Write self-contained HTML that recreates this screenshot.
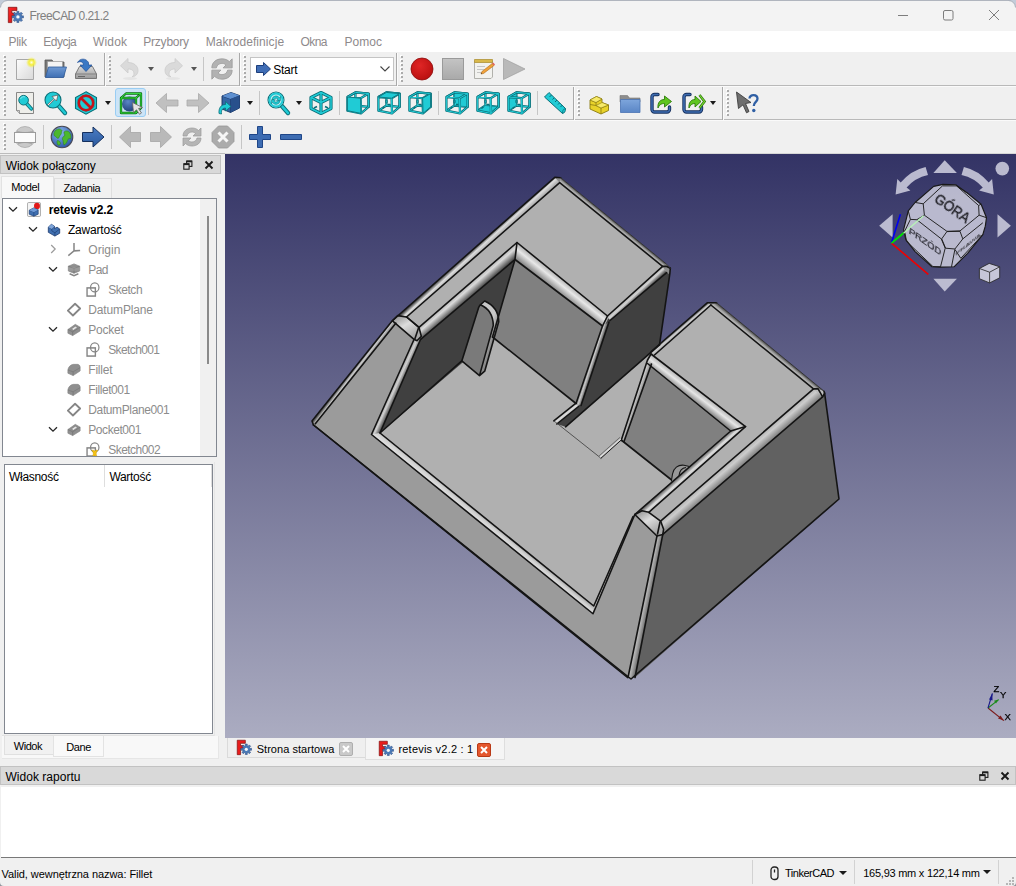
<!DOCTYPE html>
<html lang="pl">
<head>
<meta charset="utf-8">
<title>FreeCAD 0.21.2</title>
<style>
*{box-sizing:border-box;margin:0;padding:0}
html,body{width:1016px;height:886px;overflow:hidden;background:#f0f0f0}
body{position:relative;font-family:"Liberation Sans","DejaVu Sans",sans-serif;font-size:12px;color:#000}
.abs{position:absolute}
.t{position:absolute;white-space:nowrap;line-height:15px}
#titlebar{left:0;top:0;width:1016px;height:31px;background:#f3f3f3}
#menubar{left:0;top:31px;width:1016px;height:21px;background:#fff}
.tbline{position:absolute;left:0;width:1016px;height:2px;background:linear-gradient(#b9b9b9 50%,#fafafa 50%)}
.vsep{position:absolute;width:1px;background:#c6c6c6}
.grip{position:absolute;width:3px;height:28px;background-image:linear-gradient(#ababab 50%,transparent 50%),linear-gradient(#fff 50%,transparent 50%);background-size:2px 4px,2px 4px;background-position:1px 1px,0 0;background-repeat:repeat-y,repeat-y}
.ic{position:absolute;width:24px;height:24px;overflow:visible}
.dd{position:absolute;width:0;height:0;border-left:3.5px solid transparent;border-right:3.5px solid transparent;border-top:4px solid #1a1a1a}
.docktitle{position:absolute;background:#d9d9d9;border:1px solid #c2c2c2;height:18px}
.tr{color:#8c8c8c}
</style>
</head>
<body>
<!-- TITLE BAR -->
<div id="titlebar" class="abs"></div>
<div class="abs" style="left:0;top:0;width:1016px;height:1px;background:#b0b5be"></div>
<svg class="abs" style="left:0;top:0" width="12" height="12" viewBox="0 0 12 12"><path d="M0 0H7V.5A6.500 6.500 0 0 0 .5 7H0Z" fill="#c3ccd9"/><path d="M.5 7.500A7 7 0 0 1 7.500 .5" fill="none" stroke="#a9afba" stroke-width="1"/></svg>
<svg class="abs" style="left:7px;top:6px" width="18" height="18" viewBox="0 0 18 18"><defs><linearGradient id="gF" x1="0" y1="0" x2="1" y2="1"><stop offset="0" stop-color="#ff2a2a"/><stop offset="1" stop-color="#c80f0f"/></linearGradient></defs>
 <path d="M1.300 1.300H9.900V4.600H4.800V7H8V9.700H4.800V16.600H1.300Z" fill="url(#gF)" stroke="#7a0c0c" stroke-width="0.7"/>
 <path d="M9.83 5.40L11.97 5.40L11.81 7.11L12.94 7.57L14.03 6.26L15.54 7.77L14.23 8.86L14.69 9.99L16.40 9.83L16.40 11.97L14.69 11.81L14.23 12.94L15.54 14.03L14.03 15.54L12.94 14.23L11.81 14.69L11.97 16.40L9.83 16.40L9.99 14.69L8.86 14.23L7.77 15.54L6.26 14.03L7.57 12.94L7.11 11.81L5.40 11.97L5.40 9.83L7.11 9.99L7.57 8.86L6.26 7.77L7.77 6.26L8.86 7.57L9.99 7.11Z" fill="#4a7ab8" stroke="#2b4d85" stroke-width="0.6" stroke-linejoin="round"/>
 <circle cx="10.900" cy="10.900" r="1.700" fill="#f7f7f7"/>
</svg>
<div class="t" style="left:29.5px;top:9.2px;font-size:12px;letter-spacing:-0.54px;color:#808080;">FreeCAD 0.21.2</div>
<svg class="abs" style="left:890px;top:4px" width="120" height="24" viewBox="0 0 120 24" fill="none" stroke="#7d7d7d" stroke-width="1">
 <path d="M8 11.500H18"/><rect x="53.500" y="6.500" width="9.500" height="9.500" rx="1.500"/><path d="M99 6l10 10M109 6l-10 10"/>
</svg>
<svg class="abs" style="left:1004px;top:0" width="12" height="12" viewBox="0 0 12 12"><path d="M12 0H5V.5A6.500 6.500 0 0 1 11.500 7H12Z" fill="#c3ccd9"/><path d="M11.500 7.500A7 7 0 0 0 4.500 .5" fill="none" stroke="#a9afba" stroke-width="1"/></svg>
<!-- MENU BAR -->
<div id="menubar" class="abs"></div>
<div class="t" style="left:8.5px;top:34.8px;font-size:12px;letter-spacing:-0.28px;color:#8e8a8c;">Plik</div>
<div class="t" style="left:43.3px;top:34.8px;font-size:12px;letter-spacing:-0.51px;color:#8e8a8c;">Edycja</div>
<div class="t" style="left:93.1px;top:34.8px;font-size:12px;letter-spacing:0.14px;color:#8e8a8c;">Widok</div>
<div class="t" style="left:143.3px;top:34.8px;font-size:12px;letter-spacing:-0.23px;color:#8e8a8c;">Przybory</div>
<div class="t" style="left:205.7px;top:34.8px;font-size:12px;letter-spacing:0.08px;color:#8e8a8c;">Makrodefinicje</div>
<div class="t" style="left:300.6px;top:34.8px;font-size:12px;letter-spacing:-0.63px;color:#8e8a8c;">Okna</div>
<div class="t" style="left:344.5px;top:34.8px;font-size:12px;letter-spacing:0.01px;color:#8e8a8c;">Pomoc</div>
<!-- TOOLBARS -->
<div id="toolbars">
<div class="tbline" style="top:85px"></div>
<div class="tbline" style="top:119px"></div>
<div class="tbline" style="top:153px;height:1px;background:#bcbcbc"></div>
<!-- row1 grips & separators -->
<div class="grip" style="left:3px;top:55px"></div>
<div class="vsep" style="left:104px;top:53px;height:33px;width:2px;background:linear-gradient(to right,#a9a9a9 50%,#fbfbfb 50%)"></div>
<div class="grip" style="left:108px;top:55px"></div>
<div class="vsep" style="left:203px;top:57px;height:24px"></div>
<div class="vsep" style="left:239px;top:53px;height:33px;width:2px;background:linear-gradient(to right,#a9a9a9 50%,#fbfbfb 50%)"></div>
<div class="grip" style="left:243px;top:55px"></div>
<div class="vsep" style="left:396px;top:53px;height:33px;width:2px;background:linear-gradient(to right,#a9a9a9 50%,#fbfbfb 50%)"></div>
<div class="grip" style="left:400px;top:55px"></div>
<!-- row2 -->
<div class="grip" style="left:3px;top:89px"></div>
<div class="vsep" style="left:148px;top:91px;height:24px"></div>
<div class="vsep" style="left:259px;top:91px;height:24px"></div>
<div class="vsep" style="left:339px;top:91px;height:24px"></div>
<div class="vsep" style="left:438px;top:91px;height:24px"></div>
<div class="vsep" style="left:537px;top:91px;height:24px"></div>
<div class="vsep" style="left:573px;top:87px;height:33px;width:2px;background:linear-gradient(to right,#a9a9a9 50%,#fbfbfb 50%)"></div>
<div class="grip" style="left:577px;top:89px"></div>
<div class="vsep" style="left:722px;top:87px;height:33px;width:2px;background:linear-gradient(to right,#a9a9a9 50%,#fbfbfb 50%)"></div>
<div class="grip" style="left:726px;top:89px"></div>
<!-- row3 -->
<div class="grip" style="left:3px;top:123px"></div>
<div class="vsep" style="left:43px;top:125px;height:24px"></div>
<div class="vsep" style="left:111px;top:125px;height:24px"></div>
<div class="vsep" style="left:241px;top:125px;height:24px"></div>

<!-- ROW 1 ICONS -->
<!-- new doc -->
<svg class="ic" style="left:13px;top:57px" viewBox="0 0 24 24"><defs><linearGradient id="gdoc" x1="0" y1="0" x2="1" y2="1"><stop offset="0" stop-color="#fdfdfd"/><stop offset="1" stop-color="#d9d9d9"/></linearGradient><radialGradient id="gsun"><stop offset="0" stop-color="#fffde0"/><stop offset=".45" stop-color="#f4ee3a"/><stop offset="1" stop-color="#f4ee3a" stop-opacity="0"/></radialGradient></defs>
 <path d="M3.500 2.500H20.500V22.500H3.500Z" fill="url(#gdoc)" stroke="#a8a8a8"/><circle cx="18.500" cy="5.500" r="5.500" fill="url(#gsun)"/></svg>
<!-- open folder -->
<svg class="ic" style="left:43px;top:57px" viewBox="0 0 24 24"><defs><linearGradient id="gfol" x1="0" y1="0" x2="0" y2="1"><stop offset="0" stop-color="#6f9ad3"/><stop offset="1" stop-color="#3f6fb3"/></linearGradient></defs>
 <path d="M2 3H9L10.500 5H21V20H2Z" fill="#777" stroke="#555" stroke-width=".8"/><path d="M4.500 4.500H19.500V14H4.500Z" fill="#f4f4f4" stroke="#999" stroke-width=".6"/><path d="M5.500 10H23.500L20.500 20.500H2.500Z" fill="url(#gfol)" stroke="#2f5a9b" stroke-width=".8"/></svg>
<!-- save -->
<svg class="ic" style="left:74px;top:57px" viewBox="0 0 24 24"><defs><linearGradient id="gdrv" x1="0" y1="0" x2="0" y2="1"><stop offset="0" stop-color="#d8d8d8"/><stop offset="1" stop-color="#9a9a9a"/></linearGradient></defs>
 <path d="M5.500 9.500H18.500L22.500 17V21.500H1.500V17Z" fill="url(#gdrv)" stroke="#6e6e6e" stroke-width=".9"/><path d="M1.500 17H22.500" stroke="#777" stroke-width=".8"/><path d="M4 19.500h7" stroke="#666" stroke-width="1"/>
 <path d="M3.500 5.500C6 1 12 1 14.500 5.500V8H18L12 14.500L6 8H9.500C9.500 5.500 7 3.500 3.500 5.500Z" fill="#3a78c4" stroke="#1f4f96" stroke-width=".7"/></svg>
<!-- undo (disabled) -->
<svg class="ic" style="left:118px;top:57px" viewBox="0 0 24 24"><path d="M2.500 8.800L10 1.500V5.500C16 5.500 20 9 20 13.500C20 17 17.500 19.500 14 20C16 18.500 16.500 16.500 15.500 14.500C14.500 12.500 12.500 12 10 12V16Z" fill="#dadada" stroke="#cbcbcb" stroke-width=".8"/><ellipse cx="12" cy="21.500" rx="7" ry="1.500" fill="#e4e4e4"/></svg>
<div class="dd" style="left:148px;top:67px;border-top-color:#555"></div>
<!-- redo (disabled) -->
<svg class="ic" style="left:161px;top:57px" viewBox="0 0 24 24"><g transform="translate(24,0) scale(-1,1)"><path d="M2.500 8.800L10 1.500V5.500C16 5.500 20 9 20 13.500C20 17 17.500 19.500 14 20C16 18.500 16.500 16.500 15.500 14.500C14.500 12.500 12.500 12 10 12V16Z" fill="#dadada" stroke="#cbcbcb" stroke-width=".8"/><ellipse cx="12" cy="21.500" rx="7" ry="1.500" fill="#e4e4e4"/></g></svg>
<div class="dd" style="left:191px;top:67px;border-top-color:#555"></div>
<!-- refresh (disabled) -->
<svg class="ic" style="left:210px;top:56.5px" viewBox="0 0 24 24"><g fill="#b2b2b2" stroke="#989898" stroke-width=".7" transform="translate(12 12) scale(1.13) translate(-12 -12)"><path d="M3 11C3 6 7 3 12 3C15 3 17 4 18.500 5.500L21 3V11H13L15.500 8.500C14.500 7.500 13.500 7 12 7C9.500 7 7.500 8.500 7 11Z"/><path d="M21 13C21 18 17 21 12 21C9 21 7 20 5.500 18.500L3 21V13H11L8.500 15.500C9.500 16.500 10.500 17 12 17C14.500 17 16.500 15.500 17 13Z"/></g></svg>
<!-- workbench combo -->
<div class="abs" style="left:250px;top:57px;width:144px;height:24px;background:#fff;border:1px solid #c4c4c4"></div>
<svg class="abs" style="left:255px;top:61px" width="17" height="16" viewBox="0 0 17 16"><path d="M1.500 4.500H8.500V1.500L15.500 8L8.500 14.500V11.500H1.500Z" fill="#3f6db5" stroke="#1d3f7c" stroke-width="1"/></svg>
<div class="t" style="left:273.3px;top:62.7px;font-size:12px;letter-spacing:-0.29px;">Start</div>
<svg class="abs" style="left:379px;top:65px" width="12" height="8" viewBox="0 0 12 8"><path d="M1.500 1.500L6 6L10.500 1.500" fill="none" stroke="#444" stroke-width="1.100"/></svg>
<!-- record -->
<svg class="ic" style="left:410px;top:57px" viewBox="0 0 24 24"><defs><radialGradient id="gred" cx=".4" cy=".35" r=".7"><stop offset="0" stop-color="#e02626"/><stop offset="1" stop-color="#b80f0f"/></radialGradient></defs><circle cx="12" cy="12" r="11" fill="url(#gred)" stroke="#8c0c0c" stroke-width=".8"/></svg>
<!-- stop square -->
<svg class="ic" style="left:441px;top:57px" viewBox="0 0 24 24"><defs><linearGradient id="gsq" x1="0" y1="0" x2="0" y2="1"><stop offset="0" stop-color="#c4c4c4"/><stop offset="1" stop-color="#a9a9a9"/></linearGradient></defs><rect x="1.500" y="1.500" width="21" height="21" fill="url(#gsq)" stroke="#9a9a9a"/></svg>
<!-- notepad -->
<svg class="ic" style="left:472px;top:57px" viewBox="0 0 24 24"><path d="M2.500 4.500H20.500V20L19 21.500H2.500Z" fill="#f2f2ef" stroke="#a9a9a4" stroke-width=".9"/><path d="M2.500 2.500H20.500V5.500H2.500Z" fill="#d8b84a" stroke="#a88a2a" stroke-width=".7"/><path d="M5 9.500h8M5 12.500h7M5 15.500h5" stroke="#b9b9b9" stroke-width=".8"/><path d="M9 17l2.500-.5L22 8.500l-1.800-2L10 14.500z" fill="#f0a23a" stroke="#b06a18" stroke-width=".6"/><path d="M20.200 6.500l1.800 2 1-1-1.800-2z" fill="#e25a5a"/><path d="M9 17l1-.3-.6-.9z" fill="#333"/></svg>
<!-- play (disabled) -->
<svg class="ic" style="left:502px;top:57px" viewBox="0 0 24 24"><path d="M1.500 1.500L23 12L1.500 22.500Z" fill="#b9b9b9" stroke="#a2a2a2" stroke-width=".8"/></svg>
<svg class="ic" style="left:13px;top:91px" viewBox="0 0 24 24"><path d="M3.500 1.500H20.500V22.500H6.500L3.500 19.500Z" fill="#eeeeea" stroke="#7c7c7c" stroke-width=".9"/><path d="M3.500 19.500H6.500V22.500" fill="#cfcfcf" stroke="#7c7c7c" stroke-width=".7"/><path d="M13.500 12.500L18.300 17.800" stroke="#0b6f78" stroke-width="3.600" stroke-linecap="round"/><path d="M13.500 12.500L18.300 17.800" stroke="#20cbd5" stroke-width="2" stroke-linecap="round"/><circle cx="10.600" cy="9.200" r="4.800" fill="#20cbd5" stroke="#0b6f78" stroke-width="1"/><path d="M7.500 8a3.200 3.200 0 0 1 4.500-2" stroke="#6fe3ea" stroke-width="1.100" fill="none"/></svg>
<svg class="ic" style="left:43px;top:91px" viewBox="0 0 24 24"><path d="M15 14L22 22" stroke="#0b6f78" stroke-width="4.400" stroke-linecap="round"/><path d="M15 14L22 22" stroke="#20cbd5" stroke-width="2.600" stroke-linecap="round"/><circle cx="10" cy="9" r="8" fill="#20cbd5" stroke="#0b6f78" stroke-width="1.100"/><path d="M4.500 13.500L11 7.500L9 5.500L15 4L13.500 10L11.800 8.300L5.500 14.500Z" fill="#f4f4f4" stroke="#555" stroke-width=".7"/></svg>
<svg class="ic" style="left:74px;top:91px" viewBox="0 0 24 24"><path d="M12 0.800L22.500 6.500V17.500L12 23.200L1.500 17.500V6.500Z" fill="#20cbd5" stroke="#0b6f78" stroke-width="1.100"/><path d="M12 3.500L20 8V16L12 20.500L4 16V8Z" fill="none" stroke="#0b6f78" stroke-width=".6"/><circle cx="12" cy="12" r="7.200" fill="none" stroke="#c4141a" stroke-width="2.600"/><path d="M7 7L17 17" stroke="#c4141a" stroke-width="2.600"/></svg>
<div class="dd" style="left:105px;top:101px;border-top-color:#1a1a1a"></div>
<div class="abs" style="left:115px;top:88px;width:31px;height:29px;background:#cce4f7;border:1px solid #99cdf3;border-radius:3px"></div>
<svg class="ic" style="left:119px;top:91px" viewBox="0 0 24 24"><defs><radialGradient id="gsph" cx=".4" cy=".35" r=".7"><stop offset="0" stop-color="#5b86c6"/><stop offset="1" stop-color="#1f3f7a"/></radialGradient></defs><circle cx="10.500" cy="13" r="7.500" fill="url(#gsph)"/><g fill="none" stroke="#0a6e12" stroke-width="2.300" stroke-linejoin="round"><path d="M2 7H17V22H2Z"/><path d="M2 7L7 2.500H22V17L17 22M17 7L22 2.500"/></g><g fill="none" stroke="#35d83f" stroke-width="1" stroke-linejoin="round"><path d="M2 7H17V22H2Z"/><path d="M2 7L7 2.500H22V17L17 22M17 7L22 2.500"/></g><path d="M13.500 11.500L23.500 16.500L19.500 17.500L22.500 22L20.500 23.300L17.500 18.800L14.500 21.500Z" fill="#e4e4e4" stroke="#666" stroke-width=".8"/></svg>
<svg class="ic" style="left:155px;top:91px" viewBox="0 0 24 24"><path d="M1 12L11.500 2.500V9H23V15H11.500V21.500Z" fill="#c0c0c0" stroke="#aaaaaa" stroke-width=".8"/></svg>
<svg class="ic" style="left:186px;top:91px" viewBox="0 0 24 24"><g transform="translate(24,0) scale(-1,1)"><path d="M1 12L11.500 2.500V9H23V15H11.500V21.500Z" fill="#c0c0c0" stroke="#aaaaaa" stroke-width=".8"/></g></svg>
<svg class="ic" style="left:217px;top:91px" viewBox="0 0 24 24"><path d="M5 5L14 1.500L22.500 4.500V17L13.500 21.500L5 18Z" fill="#3465a4" stroke="#16305e" stroke-width=".9"/><path d="M5 5L13.500 8L22.500 4.500M13.500 8V21.500" fill="none" stroke="#16305e" stroke-width=".8"/><path d="M5 5L14 1.500L22.500 4.500L13.500 8Z" fill="#5d8fd0"/><path d="M13.500 8L22.500 4.500V17L13.500 21.500Z" fill="#28508c"/><path d="M2 22.500C1.500 17 4 13.500 8.500 13.500V10.500L14 15.500L8.500 20V17C6 17 4 18.500 4.500 23Z" fill="#20cbd5" stroke="#0b6f78" stroke-width=".8"/></svg>
<div class="dd" style="left:247px;top:101px;border-top-color:#1a1a1a"></div>
<svg class="ic" style="left:266px;top:91px" viewBox="0 0 24 24"><path d="M15 14L22 22" stroke="#0b6f78" stroke-width="4.400" stroke-linecap="round"/><path d="M15 14L22 22" stroke="#20cbd5" stroke-width="2.600" stroke-linecap="round"/><circle cx="10" cy="9" r="8" fill="#bfeff2" stroke="#0b6f78" stroke-width="1.100"/><circle cx="10" cy="9" r="6.500" fill="none" stroke="#20cbd5" stroke-width="2"/><path d="M6 8.500A4 4 0 0 1 13.500 7L14.500 5.500V9.500H10.500L12 8A2.500 2.500 0 0 0 8 8.500ZM14 9.800A4 4 0 0 1 6.500 11.300L5.500 12.800V8.800H9.500L8 10.300A2.500 2.500 0 0 0 12 9.800Z" fill="#20cbd5" stroke="#0b6f78" stroke-width=".5"/></svg>
<div class="dd" style="left:296px;top:101px;border-top-color:#1a1a1a"></div>
<svg class="ic" style="left:309px;top:91px" viewBox="0 0 24 24"><g fill="none" stroke="#0b6f78" stroke-width="3.200" stroke-linejoin="round"><path d="M12 1.500L22 6.500V17.500L12 22.500L2 17.500V6.500Z"/><path d="M2 6.500L12 11.500L22 6.500M12 11.500V22.500M12 1.500V11"/></g><g fill="none" stroke="#20cbd5" stroke-width="1.500" stroke-linejoin="round"><path d="M12 1.500L22 6.500V17.500L12 22.500L2 17.500V6.500Z"/><path d="M2 6.500L12 11.500L22 6.500M12 11.500V22.500M12 1.500V11"/></g><path d="M5 17l3-1.500M19 17l-3-1.500" stroke="#0b6f78" stroke-width="1.600"/></svg>
<svg class="ic" style="left:346px;top:91px" viewBox="0 0 24 24"><path d="M9.4 1.4L22.6 2.6L22.6 15.9L9.4 14.5ZM1.4 6L9.4 1.4M1.4 19.7L9.4 14.5" fill="none" stroke="#0b6f78" stroke-width="2.300" stroke-linejoin="round"/><path d="M9.4 1.4L22.6 2.6L22.6 15.9L9.4 14.5ZM1.4 6L9.4 1.4M1.4 19.7L9.4 14.5" fill="none" stroke="#20cbd5" stroke-width="1" stroke-linejoin="round"/><path d="M1.4 6L14.6 7.2L15 22.4L1.4 19.7ZM14.6 7.2L22.6 2.6L22.6 15.9L15 22.4ZM1.4 6L9.4 1.4L22.6 2.6" fill="none" stroke="#0b6f78" stroke-width="2.300" stroke-linejoin="round"/><path d="M1.4 6L14.6 7.2L15 22.4L1.4 19.7ZM14.6 7.2L22.6 2.6L22.6 15.9L15 22.4ZM1.4 6L9.4 1.4L22.6 2.6" fill="none" stroke="#20cbd5" stroke-width="1" stroke-linejoin="round"/><path d="M1.4 6L14.6 7.2L15 22.4L1.4 19.7Z" fill="#20cbd5" stroke="#0b6f78" stroke-width=".9" stroke-linejoin="round"/></svg>
<svg class="ic" style="left:377px;top:91px" viewBox="0 0 24 24"><path d="M9.4 1.4L22.6 2.6L22.6 15.9L9.4 14.5ZM1.4 6L9.4 1.4M1.4 19.7L9.4 14.5" fill="none" stroke="#0b6f78" stroke-width="2.300" stroke-linejoin="round"/><path d="M9.4 1.4L22.6 2.6L22.6 15.9L9.4 14.5ZM1.4 6L9.4 1.4M1.4 19.7L9.4 14.5" fill="none" stroke="#20cbd5" stroke-width="1" stroke-linejoin="round"/><ellipse cx="9.500" cy="10.500" rx=".9" ry="1.600" fill="none" stroke="#0b6f78" stroke-width=".8"/><path d="M5.500 17.500l2-1.500M11 13.500h2.500" stroke="#0b6f78" stroke-width="1.300"/><path d="M1.4 6L14.6 7.2L15 22.4L1.4 19.7ZM14.6 7.2L22.6 2.6L22.6 15.9L15 22.4ZM1.4 6L9.4 1.4L22.6 2.6" fill="none" stroke="#0b6f78" stroke-width="2.300" stroke-linejoin="round"/><path d="M1.4 6L14.6 7.2L15 22.4L1.4 19.7ZM14.6 7.2L22.6 2.6L22.6 15.9L15 22.4ZM1.4 6L9.4 1.4L22.6 2.6" fill="none" stroke="#20cbd5" stroke-width="1" stroke-linejoin="round"/><path d="M1.4 6L14.6 7.2L22.6 2.6L9.4 1.4Z" fill="#20cbd5" stroke="#0b6f78" stroke-width=".9" stroke-linejoin="round"/></svg>
<svg class="ic" style="left:408px;top:91px" viewBox="0 0 24 24"><path d="M9.4 1.4L22.6 2.6L22.6 15.9L9.4 14.5ZM1.4 6L9.4 1.4M1.4 19.7L9.4 14.5" fill="none" stroke="#0b6f78" stroke-width="2.300" stroke-linejoin="round"/><path d="M9.4 1.4L22.6 2.6L22.6 15.9L9.4 14.5ZM1.4 6L9.4 1.4M1.4 19.7L9.4 14.5" fill="none" stroke="#20cbd5" stroke-width="1" stroke-linejoin="round"/><ellipse cx="9.500" cy="10.500" rx=".9" ry="1.600" fill="none" stroke="#0b6f78" stroke-width=".8"/><path d="M5.500 17.500l2-1.500M11 13.500h2.500" stroke="#0b6f78" stroke-width="1.300"/><path d="M1.4 6L14.6 7.2L15 22.4L1.4 19.7ZM14.6 7.2L22.6 2.6L22.6 15.9L15 22.4ZM1.4 6L9.4 1.4L22.6 2.6" fill="none" stroke="#0b6f78" stroke-width="2.300" stroke-linejoin="round"/><path d="M1.4 6L14.6 7.2L15 22.4L1.4 19.7ZM14.6 7.2L22.6 2.6L22.6 15.9L15 22.4ZM1.4 6L9.4 1.4L22.6 2.6" fill="none" stroke="#20cbd5" stroke-width="1" stroke-linejoin="round"/><path d="M14.6 7.2L22.6 2.6L22.6 15.9L15 22.4Z" fill="#20cbd5" stroke="#0b6f78" stroke-width=".9" stroke-linejoin="round"/></svg>
<svg class="ic" style="left:445px;top:91px" viewBox="0 0 24 24"><path d="M9.4 1.4L22.6 2.6L22.6 15.9L9.4 14.5ZM1.4 6L9.4 1.4M1.4 19.7L9.4 14.5" fill="none" stroke="#0b6f78" stroke-width="2.300" stroke-linejoin="round"/><path d="M9.4 1.4L22.6 2.6L22.6 15.9L9.4 14.5ZM1.4 6L9.4 1.4M1.4 19.7L9.4 14.5" fill="none" stroke="#20cbd5" stroke-width="1" stroke-linejoin="round"/><path d="M9.4 1.4L22.6 2.6L22.6 15.9L9.4 14.5Z" fill="#20cbd5" stroke="#0b6f78" stroke-width=".6"/><ellipse cx="9.500" cy="10.500" rx=".9" ry="1.600" fill="none" stroke="#0b6f78" stroke-width=".8"/><path d="M5.500 17.500l2-1.500M11 13.500h2.500" stroke="#0b6f78" stroke-width="1.300"/><path d="M1.4 6L14.6 7.2L15 22.4L1.4 19.7ZM14.6 7.2L22.6 2.6L22.6 15.9L15 22.4ZM1.4 6L9.4 1.4L22.6 2.6" fill="none" stroke="#0b6f78" stroke-width="2.300" stroke-linejoin="round"/><path d="M1.4 6L14.6 7.2L15 22.4L1.4 19.7ZM14.6 7.2L22.6 2.6L22.6 15.9L15 22.4ZM1.4 6L9.4 1.4L22.6 2.6" fill="none" stroke="#20cbd5" stroke-width="1" stroke-linejoin="round"/></svg>
<svg class="ic" style="left:476px;top:91px" viewBox="0 0 24 24"><path d="M9.4 1.4L22.6 2.6L22.6 15.9L9.4 14.5ZM1.4 6L9.4 1.4M1.4 19.7L9.4 14.5" fill="none" stroke="#0b6f78" stroke-width="2.300" stroke-linejoin="round"/><path d="M9.4 1.4L22.6 2.6L22.6 15.9L9.4 14.5ZM1.4 6L9.4 1.4M1.4 19.7L9.4 14.5" fill="none" stroke="#20cbd5" stroke-width="1" stroke-linejoin="round"/><path d="M1.4 19.7L15 22.4L22.6 15.9L9.4 14.5Z" fill="#20cbd5" stroke="#0b6f78" stroke-width=".6"/><ellipse cx="9.500" cy="10.500" rx=".9" ry="1.600" fill="none" stroke="#0b6f78" stroke-width=".8"/><path d="M5.500 17.500l2-1.500M11 13.500h2.500" stroke="#0b6f78" stroke-width="1.300"/><path d="M1.4 6L14.6 7.2L15 22.4L1.4 19.7ZM14.6 7.2L22.6 2.6L22.6 15.9L15 22.4ZM1.4 6L9.4 1.4L22.6 2.6" fill="none" stroke="#0b6f78" stroke-width="2.300" stroke-linejoin="round"/><path d="M1.4 6L14.6 7.2L15 22.4L1.4 19.7ZM14.6 7.2L22.6 2.6L22.6 15.9L15 22.4ZM1.4 6L9.4 1.4L22.6 2.6" fill="none" stroke="#20cbd5" stroke-width="1" stroke-linejoin="round"/></svg>
<svg class="ic" style="left:507px;top:91px" viewBox="0 0 24 24"><path d="M9.4 1.4L22.6 2.6L22.6 15.9L9.4 14.5ZM1.4 6L9.4 1.4M1.4 19.7L9.4 14.5" fill="none" stroke="#0b6f78" stroke-width="2.300" stroke-linejoin="round"/><path d="M9.4 1.4L22.6 2.6L22.6 15.9L9.4 14.5ZM1.4 6L9.4 1.4M1.4 19.7L9.4 14.5" fill="none" stroke="#20cbd5" stroke-width="1" stroke-linejoin="round"/><path d="M1.4 6L9.4 1.4L9.4 14.5L1.4 19.7Z" fill="#20cbd5" stroke="#0b6f78" stroke-width=".6"/><ellipse cx="9.500" cy="10.500" rx=".9" ry="1.600" fill="none" stroke="#0b6f78" stroke-width=".8"/><path d="M5.500 17.500l2-1.500M11 13.500h2.500" stroke="#0b6f78" stroke-width="1.300"/><path d="M1.4 6L14.6 7.2L15 22.4L1.4 19.7ZM14.6 7.2L22.6 2.6L22.6 15.9L15 22.4ZM1.4 6L9.4 1.4L22.6 2.6" fill="none" stroke="#0b6f78" stroke-width="2.300" stroke-linejoin="round"/><path d="M1.4 6L14.6 7.2L15 22.4L1.4 19.7ZM14.6 7.2L22.6 2.6L22.6 15.9L15 22.4ZM1.4 6L9.4 1.4L22.6 2.6" fill="none" stroke="#20cbd5" stroke-width="1" stroke-linejoin="round"/></svg>
<svg class="ic" style="left:543px;top:91px" viewBox="0 0 24 24"><path d="M6 1.500L22.500 17.500C22.500 20.500 21.500 22 19.500 22.500L1.500 6Z" fill="#20cbd5" stroke="#0b6f78" stroke-width="1"/><path d="M22.500 17.500C20 18 19.500 20 19.500 22.500" fill="none" stroke="#0b6f78" stroke-width=".8"/><path d="M6.500 6l2-2M9.500 8.500l1.500-1.500M12 11l2-2M15 13.500l1.500-1.500M17.500 16l2-2" stroke="#0b6f78" stroke-width="1"/></svg>
<svg class="ic" style="left:587px;top:91px" viewBox="0 0 24 24"><path d="M3 9L9.500 5.500L15 8V11.500L21.500 14V19.500L14 23L3 18Z" fill="#e8d22a" stroke="#8a7a10" stroke-width=".9"/><path d="M3 9L9 11.500L15 8M9 11.500V14.500L14 17L21.500 14M14 17V23M3 13.500L9 14.500" fill="none" stroke="#8a7a10" stroke-width=".8"/><path d="M3 9L9.500 5.500L15 8L9 11.500Z" fill="#f7ea6a" stroke="#8a7a10" stroke-width=".6"/><path d="M9 14.500L15 11.500L21.500 14L14 17Z" fill="#f7ea6a" stroke="#8a7a10" stroke-width=".6"/></svg>
<svg class="ic" style="left:618px;top:91px" viewBox="0 0 24 24"><defs><linearGradient id="gf2" x1="0" y1="0" x2="0" y2="1"><stop offset="0" stop-color="#7ea6dc"/><stop offset="1" stop-color="#5a86c6"/></linearGradient></defs><path d="M2 4.500H9.500L11.500 7H22V11H2Z" fill="#8d8d8d" stroke="#777" stroke-width=".6"/><path d="M2.500 8.500H22V21.500H2.500Z" fill="url(#gf2)" stroke="#4a74b4" stroke-width=".8"/></svg>
<svg class="ic" style="left:649px;top:91px" viewBox="0 0 24 24"><path d="M9 3.500H5.500A2.500 2.500 0 0 0 3 6V18.500A2.500 2.500 0 0 0 5.500 21H18A2.500 2.500 0 0 0 20.500 18.500V16" fill="none" stroke="#16305e" stroke-width="3.400" stroke-linecap="round"/><path d="M9 3.500H5.500A2.500 2.500 0 0 0 3 6V18.500A2.500 2.500 0 0 0 5.500 21H18A2.500 2.500 0 0 0 20.500 18.500V16" fill="none" stroke="#3e6cb0" stroke-width="1.600" stroke-linecap="round"/><path d="M9 17C8.500 11.500 11 8.500 15.500 8.500V5L22.500 10.500L15.500 16V12.500C12.500 12.500 10.500 13.500 9 17Z" fill="#5fc51f" stroke="#2c7a0a" stroke-width=".9"/></svg>
<svg class="ic" style="left:681px;top:91px" viewBox="0 0 24 24"><path d="M9 3.500H5.500A2.500 2.500 0 0 0 3 6V18.500A2.500 2.500 0 0 0 5.500 21H18A2.500 2.500 0 0 0 20.500 18.500V16" fill="none" stroke="#16305e" stroke-width="3.400" stroke-linecap="round"/><path d="M9 3.500H5.500A2.500 2.500 0 0 0 3 6V18.500A2.500 2.500 0 0 0 5.500 21H18A2.500 2.500 0 0 0 20.500 18.500V16" fill="none" stroke="#3e6cb0" stroke-width="1.600" stroke-linecap="round"/><path d="M8 17C7.500 11.500 10 8.500 14 8.500V5L20 10.500L14 16V12.500C11.500 12.500 9.500 13.500 8 17Z" fill="#5fc51f" stroke="#2c7a0a" stroke-width=".9"/><path d="M18.500 4L23.500 10.500L18.500 17" fill="none" stroke="#2c7a0a" stroke-width="2.600"/><path d="M18.500 4L23.500 10.500L18.500 17" fill="none" stroke="#7fdc3a" stroke-width="1.100"/></svg>
<div class="dd" style="left:710px;top:101px;border-top-color:#1a1a1a"></div>
<svg class="ic" style="left:735px;top:91px" viewBox="0 0 24 24"><path d="M1.500 1L16 11.500L10.500 12.500L14 20.500L11.500 21.800L8 13.800L3.500 17.500Z" fill="#6e6e6e" stroke="#3e3e3e" stroke-width=".9"/><path d="M14.500 7.500C14.500 3 22.500 3 22.500 7.800C22.500 11 18.800 11 18.800 15" fill="none" stroke="#2f5fa4" stroke-width="2.300"/><circle cx="18.800" cy="19.500" r="1.700" fill="#2f5fa4"/></svg>
<svg class="ic" style="left:13px;top:125px" viewBox="0 0 24 24"><circle cx="12" cy="12" r="10.500" fill="#c9c9c9" stroke="#aaa" stroke-width=".8"/><path d="M4 6c3 2 13 2 16 0M5 19c3-2 11-2 14 0" fill="none" stroke="#9c9c9c" stroke-width=".9"/><rect x="1.500" y="7.500" width="21" height="10" fill="#fbfbfb" stroke="#9c9c9c"/></svg>
<svg class="ic" style="left:50px;top:125px" viewBox="0 0 24 24"><defs><radialGradient id="gglb" cx=".4" cy=".3" r=".75"><stop offset="0" stop-color="#8db8ef"/><stop offset="1" stop-color="#2a55a4"/></radialGradient></defs><circle cx="12" cy="12" r="10.800" fill="url(#gglb)" stroke="#4a4a55" stroke-width="1.100"/><path d="M6 5C9 3 11 4 12 5.500C11 7 12 8.500 10.500 10C9 11 9.500 13 8 13.500C6.500 13 5.500 11 4 10.500C3.500 8 4.500 6 6 5ZM14 7C15.500 5.500 18 5.500 19.500 7.500C21 9.500 21.500 12 20.500 14C19.500 13 18 13.500 17.500 15.500C17 17.500 15.500 19.500 14 20C13 18 13.500 16 12.500 14.500C12 13 13 11.500 14.500 11C15.500 9.500 13.500 8.500 14 7ZM7.500 15.500C9 15.500 10.500 17 10.500 18.500C10 20 9 20.500 8 20C7 18.500 6.500 17 7.500 15.500Z" fill="#4cb82e" stroke="#2b7a18" stroke-width=".5"/></svg>
<svg class="ic" style="left:81px;top:125px" viewBox="0 0 24 24"><defs><linearGradient id="gba" x1="0" y1="0" x2="0" y2="1"><stop offset="0" stop-color="#4a7cc4"/><stop offset="1" stop-color="#2c5a9e"/></linearGradient></defs><path d="M1.500 7.500H12V2L23 12L12 22V16.500H1.500Z" fill="url(#gba)" stroke="#15305e" stroke-width="1"/></svg>
<svg class="ic" style="left:118px;top:125px" viewBox="0 0 24 24"><path d="M1.500 12L12.500 1.500V7.500H22.500V16.500H12.500V22.500Z" fill="#b9b9b9" stroke="#a4a4a4" stroke-width=".8"/></svg>
<svg class="ic" style="left:149px;top:125px" viewBox="0 0 24 24"><g transform="translate(24,0) scale(-1,1)"><path d="M1.500 12L12.500 1.500V7.500H22.500V16.500H12.500V22.500Z" fill="#b9b9b9" stroke="#a4a4a4" stroke-width=".8"/></g></svg>
<svg class="ic" style="left:180px;top:125px" viewBox="0 0 24 24"><g fill="#b5b5b5" stroke="#9a9a9a" stroke-width=".7"><path d="M3 11C3 6 7 3 12 3C15 3 17 4 18.500 5.500L21 3V11H13L15.500 8.500C14.500 7.500 13.500 7 12 7C9.500 7 7.500 8.500 7 11Z"/><path d="M21 13C21 18 17 21 12 21C9 21 7 20 5.500 18.500L3 21V13H11L8.500 15.500C9.500 16.500 10.500 17 12 17C14.500 17 16.500 15.500 17 13Z"/></g></svg>
<svg class="ic" style="left:211px;top:125px" viewBox="0 0 24 24"><path d="M7.500 1H16.500L23 7.500V16.500L16.500 23H7.500L1 16.500V7.500Z" fill="#ababab" stroke="#989898" stroke-width=".8"/><path d="M7.500 7.500L16.500 16.500M16.500 7.500L7.500 16.500" stroke="#f6f6f6" stroke-width="3"/></svg>
<svg class="ic" style="left:248px;top:125px" viewBox="0 0 24 24"><path d="M9.500 1.500H14.500V9.500H22.500V14.500H14.500V22.500H9.500V14.500H1.500V9.500H9.500Z" fill="#3d6cb2" stroke="#1f4688" stroke-width="1"/></svg>
<svg class="ic" style="left:279px;top:125px" viewBox="0 0 24 24"><path d="M1.500 9.500H22.500V14.500H1.500Z" fill="#3d6cb2" stroke="#1f4688" stroke-width="1"/></svg>
</div>
<!-- LEFT DOCK -->
<div id="leftdock">
<div class="docktitle" style="left:0;top:155px;width:221px;height:19px"></div>
<div class="t" style="left:5.7px;top:159.4px;font-size:12px;letter-spacing:-0.04px;">Widok połączony</div>
<svg class="abs" style="left:183px;top:160px" width="10" height="10" viewBox="0 0 10 10" fill="none" stroke="#1e1e1e" stroke-width="1.100"><rect x="3.600" y="1.100" width="5.300" height="5.300"/><path d="M3.600 1.400H8.900" stroke-width="1.800"/><rect x=".8" y="3.800" width="5.300" height="5.400" fill="#d9d9d9"/><path d="M.8 4.200H6.100" stroke-width="1.800"/></svg>
<svg class="abs" style="left:204px;top:160px" width="10" height="10" viewBox="0 0 10 10" fill="none" stroke="#1a1a1a" stroke-width="1.900"><path d="M1.500 1.500l7 7M8.500 1.500l-7 7"/></svg>
<div class="abs" style="left:54px;top:178px;width:58px;height:20px;background:#f1f1f1;border:1px solid #dfdfdf;border-bottom:none"></div>
<div class="abs" style="left:1px;top:176px;width:53px;height:22px;background:#f8f8f8;border:1px solid #e2e2e2;border-bottom:none"></div>
<div class="t" style="left:11.3px;top:180.4px;font-size:11px;letter-spacing:-0.42px;">Model</div>
<div class="t" style="left:63.4px;top:181.2px;font-size:11px;letter-spacing:-0.41px;">Zadania</div>
<div class="abs" style="left:2px;top:198px;width:215px;height:259px;background:#fff;border:1px solid #828790;overflow:hidden">
<div class="abs" style="left:197px;top:0;width:16px;height:257px;background:#f0f0f0"></div>
<div class="abs" style="left:204px;top:17px;width:2px;height:148px;background:#8a8a8a"></div>
<svg class="abs" style="left:4.5px;top:6.5px" width="10" height="7" viewBox="0 0 10 7"><path d="M1 1.200L5 5.200L9 1.200" fill="none" stroke="#262626" stroke-width="1.300"/></svg>
<svg class="abs" style="left:24px;top:2.5px" width="14" height="15" viewBox="0 0 16 16" preserveAspectRatio="none"><rect x=".5" y=".5" width="15" height="15" rx="1.500" fill="#f4f4f4" stroke="#a4a4a4"/><circle cx="11.400" cy="4.200" r="3.400" fill="#e21a1a"/><path d="M2.500 8.800L7.500 6.300L12.800 8.300V13L7.800 15.200L2.500 13Z" fill="#3f6fb0" stroke="#1c3a6e" stroke-width=".7"/><path d="M2.500 8.800L7.800 10.800L12.800 8.300M7.800 10.800V15.200" stroke="#1c3a6e" stroke-width=".6" fill="none"/><path d="M2.500 8.800L7.500 6.300L12.800 8.300L7.800 10.800Z" fill="#6f9ad6"/></svg>
<div class="t" style="left:45.7px;top:3.8px;font-size:12px;letter-spacing:-0.08px;font-weight:bold;">retevis v2.2</div>
<svg class="abs" style="left:24.5px;top:26.5px" width="10" height="7" viewBox="0 0 10 7"><path d="M1 1.200L5 5.200L9 1.200" fill="none" stroke="#262626" stroke-width="1.300"/></svg>
<svg class="abs" style="left:44px;top:22.5px" width="14" height="15" viewBox="0 0 16 16" preserveAspectRatio="none"><path d="M1.500 5.500L5 2.500L8.500 4.500V7L11.500 5.500L14.500 7.500V12L9 15L1.500 11Z" fill="#3f6fb0" stroke="#1c3a6e" stroke-width=".9"/><path d="M1.500 5.500L5.500 7.500L8.500 4.500M5.500 7.500V9.500L9 11.500L14.500 7.500M9 11.500V15" fill="none" stroke="#1c3a6e" stroke-width=".7"/><path d="M1.500 5.500L5 2.500L8.500 4.500L5.500 7.500Z" fill="#7ea4d8"/></svg>
<div class="t" style="left:64.9px;top:23.8px;font-size:12px;letter-spacing:-0.18px;">Zawartość</div>
<svg class="abs" style="left:47px;top:45px" width="7" height="10" viewBox="0 0 7 10"><path d="M1.200 1L5.200 5L1.200 9" fill="none" stroke="#9a9a9a" stroke-width="1.200"/></svg>
<svg class="abs" style="left:64px;top:42.5px" width="14" height="15" viewBox="0 0 16 16" preserveAspectRatio="none"><path d="M8 1V9.500M8 9.500L1.500 14.500M8 9.500L15 9" fill="none" stroke="#858585" stroke-width="1.700"/></svg>
<div class="t" style="left:85.3px;top:43.8px;font-size:12px;letter-spacing:0.02px;color:#8c8c8c;">Origin</div>
<svg class="abs" style="left:44.5px;top:66.5px" width="10" height="7" viewBox="0 0 10 7"><path d="M1 1.200L5 5.200L9 1.200" fill="none" stroke="#262626" stroke-width="1.300"/></svg>
<svg class="abs" style="left:64px;top:62.5px" width="14" height="15" viewBox="0 0 16 16" preserveAspectRatio="none"><path d="M1.500 4.500L8 2L14.500 4.500V9.500L8 12L1.500 9.500Z" fill="#8f8f8f" stroke="#858585" stroke-width=".8"/><path d="M1.500 4.500L8 7L14.500 4.500M8 7V12" stroke="#6c6c6c" stroke-width=".6" fill="none"/><path d="M3 12.500L8 14.500L13 12.500" stroke="#858585" stroke-width="1.600" fill="none"/><path d="M1.500 6.500h13M1.500 8.500h13" stroke="#b5b5b5" stroke-width=".6"/></svg>
<div class="t" style="left:85.3px;top:63.8px;font-size:12px;letter-spacing:-0.65px;color:#8c8c8c;">Pad</div>
<svg class="abs" style="left:83px;top:82.5px" width="14" height="15" viewBox="0 0 16 16" preserveAspectRatio="none"><circle cx="10" cy="5.800" r="4.800" fill="none" stroke="#858585" stroke-width="1.400"/><rect x="1.200" y="6.300" width="9.500" height="8.700" fill="none" stroke="#858585" stroke-width="1.600"/></svg>
<div class="t" style="left:105.2px;top:83.8px;font-size:12px;letter-spacing:-0.46px;color:#8c8c8c;">Sketch</div>
<svg class="abs" style="left:64px;top:102.5px" width="14" height="15" viewBox="0 0 16 16" preserveAspectRatio="none"><path d="M9.200 1.800L15 7L6.800 14.500L1 9.200Z" fill="none" stroke="#858585" stroke-width="2.100" stroke-linejoin="round"/></svg>
<div class="t" style="left:85.3px;top:103.8px;font-size:12px;letter-spacing:-0.15px;color:#8c8c8c;">DatumPlane</div>
<svg class="abs" style="left:44.5px;top:126.5px" width="10" height="7" viewBox="0 0 10 7"><path d="M1 1.200L5 5.200L9 1.200" fill="none" stroke="#262626" stroke-width="1.300"/></svg>
<svg class="abs" style="left:64px;top:122.5px" width="14" height="15" viewBox="0 0 16 16" preserveAspectRatio="none"><path d="M1 8L9.500 2.500L15 5.500V9.500L6.500 14.500L1 12Z" fill="#8f8f8f" stroke="#858585" stroke-width=".7"/><path d="M1 8L6.500 10.500L15 5.500M6.500 10.500V14.500" stroke="#6c6c6c" stroke-width=".6" fill="none"/><path d="M5 7.500L9.500 4.500L12 5.800L7.500 8.800Z" fill="#e4e4e4" stroke="#6c6c6c" stroke-width=".5"/></svg>
<div class="t" style="left:85.3px;top:123.8px;font-size:12px;letter-spacing:-0.24px;color:#8c8c8c;">Pocket</div>
<svg class="abs" style="left:83px;top:142.5px" width="14" height="15" viewBox="0 0 16 16" preserveAspectRatio="none"><circle cx="10" cy="5.800" r="4.800" fill="none" stroke="#858585" stroke-width="1.400"/><rect x="1.200" y="6.300" width="9.500" height="8.700" fill="none" stroke="#858585" stroke-width="1.600"/></svg>
<div class="t" style="left:105.2px;top:143.8px;font-size:12px;letter-spacing:-0.61px;color:#8c8c8c;">Sketch001</div>
<svg class="abs" style="left:64px;top:162.5px" width="14" height="15" viewBox="0 0 16 16" preserveAspectRatio="none"><path d="M1 8.500C1.500 5 4 3 7.500 2.500L12.500 2.500C14 3 15 4 15 5.500V9.500L7 14.500L1 12Z" fill="#8f8f8f" stroke="#858585" stroke-width=".7"/><path d="M1 8.500L7 10.500L15 6M7 10.500V14.500" stroke="#6c6c6c" stroke-width=".5" fill="none"/></svg>
<div class="t" style="left:85.3px;top:163.8px;font-size:12px;letter-spacing:-0.23px;color:#8c8c8c;">Fillet</div>
<svg class="abs" style="left:64px;top:182.5px" width="14" height="15" viewBox="0 0 16 16" preserveAspectRatio="none"><path d="M1 8.500C1.500 5 4 3 7.500 2.500L12.500 2.500C14 3 15 4 15 5.500V9.500L7 14.500L1 12Z" fill="#8f8f8f" stroke="#858585" stroke-width=".7"/><path d="M1 8.500L7 10.500L15 6M7 10.500V14.500" stroke="#6c6c6c" stroke-width=".5" fill="none"/></svg>
<div class="t" style="left:85.3px;top:183.8px;font-size:12px;letter-spacing:-0.43px;color:#8c8c8c;">Fillet001</div>
<svg class="abs" style="left:64px;top:202.5px" width="14" height="15" viewBox="0 0 16 16" preserveAspectRatio="none"><path d="M9.200 1.800L15 7L6.800 14.500L1 9.200Z" fill="none" stroke="#858585" stroke-width="2.100" stroke-linejoin="round"/></svg>
<div class="t" style="left:85.3px;top:203.8px;font-size:12px;letter-spacing:-0.38px;color:#8c8c8c;">DatumPlane001</div>
<svg class="abs" style="left:44.5px;top:226.5px" width="10" height="7" viewBox="0 0 10 7"><path d="M1 1.200L5 5.200L9 1.200" fill="none" stroke="#262626" stroke-width="1.300"/></svg>
<svg class="abs" style="left:64px;top:222.5px" width="14" height="15" viewBox="0 0 16 16" preserveAspectRatio="none"><path d="M1 8L9.500 2.500L15 5.500V9.500L6.500 14.500L1 12Z" fill="#8f8f8f" stroke="#858585" stroke-width=".7"/><path d="M1 8L6.500 10.500L15 5.500M6.500 10.500V14.500" stroke="#6c6c6c" stroke-width=".6" fill="none"/><path d="M5 7.500L9.500 4.500L12 5.800L7.500 8.800Z" fill="#e4e4e4" stroke="#6c6c6c" stroke-width=".5"/></svg>
<div class="t" style="left:85.3px;top:223.8px;font-size:12px;letter-spacing:-0.44px;color:#8c8c8c;">Pocket001</div>
<svg class="abs" style="left:83px;top:242.5px" width="14" height="15" viewBox="0 0 16 16" preserveAspectRatio="none"><circle cx="10" cy="5.800" r="4.800" fill="none" stroke="#858585" stroke-width="1.400"/><rect x="1.200" y="6.300" width="9.500" height="8.700" fill="none" stroke="#858585" stroke-width="1.600"/><path d="M6.500 9C9 11 9 14 6.500 16H9.500C9.500 14 10.500 14 10.500 16H13.500C11 14 11 11 13.500 9L11.500 8.500C11 10 9 10 8.500 8.500Z" fill="#f6c414" stroke="#c89200" stroke-width=".5"/></svg>
<div class="t" style="left:105.2px;top:243.8px;font-size:12px;letter-spacing:-0.53px;color:#8c8c8c;">Sketch002</div>
</div>
<div class="abs" style="left:4px;top:464px;width:209px;height:270px;background:#fff;border:1px solid #828790"></div>
<div class="abs" style="left:104px;top:465px;width:1px;height:22px;background:#dedede"></div>
<div class="abs" style="left:211px;top:465px;width:1px;height:22px;background:#dedede"></div>
<div class="t" style="left:9px;top:469.8px;font-size:12px;letter-spacing:-0.3px;">Własność</div>
<div class="t" style="left:109.4px;top:469.8px;font-size:12px;letter-spacing:-0.29px;">Wartość</div>
<div class="abs" style="left:2px;top:736px;width:217px;height:23px;background:#f8f8f8;border-bottom:1px solid #e6e6e6;border-right:1px solid #e6e6e6"></div>
<div class="abs" style="left:2px;top:735px;width:213px;height:1px;background:#e2e2e2"></div>
<div class="abs" style="left:214px;top:462px;width:1px;height:274px;background:#e6e6e6"></div>
<div class="abs" style="left:4px;top:736px;width:50px;height:19px;background:#f1f1f1;border:1px solid #e0e0e0;border-top:none"></div>
<div class="abs" style="left:53px;top:736px;width:51px;height:21px;background:#f9f9f9;border:1px solid #e3e3e3;border-top:none"></div>
<div class="t" style="left:13.75px;top:738.6px;font-size:11px;letter-spacing:-0.45px;">Widok</div>
<div class="t" style="left:66.25px;top:739.6px;font-size:11px;letter-spacing:-0.43px;">Dane</div>
</div>
<!-- 3D VIEW -->
<div id="view3d">
<svg class="abs" style="left:225px;top:153px" width="791" height="585" viewBox="225 153 791 585"><defs><filter id="noop" x="-20%" y="-20%" width="140%" height="140%"><feOffset dx="0" dy="0"/></filter><linearGradient id="bg3d" x1="0" y1="0" x2="0" y2="1"><stop offset="0" stop-color="#333365"/><stop offset="1" stop-color="#abacc1"/></linearGradient><linearGradient id="g1" gradientUnits="userSpaceOnUse" x1="352.2" y1="370.8" x2="355.6" y2="373.4"><stop offset="0" stop-color="#5a5a5a"/><stop offset="0.55" stop-color="#cccccc"/><stop offset="1" stop-color="#9b9b9b"/></linearGradient><linearGradient id="g2" gradientUnits="userSpaceOnUse" x1="642.5" y1="606.8" x2="648.5" y2="608.0"><stop offset="0" stop-color="#c4c4c4"/><stop offset="0.45" stop-color="#a0a0a0"/><stop offset="1" stop-color="#6a6a6a"/></linearGradient><linearGradient id="g3" gradientUnits="userSpaceOnUse" x1="737.0" y1="455.0" x2="744.7" y2="463.9"><stop offset="0" stop-color="#b4b4b4"/><stop offset="0.35" stop-color="#cccccc"/><stop offset="1" stop-color="#7c7c7c"/></linearGradient><linearGradient id="g4" gradientUnits="userSpaceOnUse" x1="698.2" y1="390.5" x2="691.6" y2="399.1"><stop offset="0" stop-color="#b4b4b4"/><stop offset="0.45" stop-color="#e6e6e6"/><stop offset="1" stop-color="#8a8a8a"/></linearGradient><linearGradient id="g5" gradientUnits="userSpaceOnUse" x1="697.1" y1="469.4" x2="692.5" y2="464.2"><stop offset="0" stop-color="#c8c8c8"/><stop offset="0.4" stop-color="#dcdcdc"/><stop offset="1" stop-color="#5a5a5a"/></linearGradient><linearGradient id="g6" gradientUnits="userSpaceOnUse" x1="634.4" y1="400.2" x2="638.2" y2="401.5"><stop offset="0" stop-color="#d8d8d8"/><stop offset="1" stop-color="#8c8c8c"/></linearGradient><linearGradient id="g7" gradientUnits="userSpaceOnUse" x1="589.2" y1="364.8" x2="594.1" y2="366.4"><stop offset="0" stop-color="#8a8a8a"/><stop offset="0.35" stop-color="#cacaca"/><stop offset="1" stop-color="#4a4a4a"/></linearGradient><linearGradient id="g8" gradientUnits="userSpaceOnUse" x1="635.0" y1="291.2" x2="639.2" y2="295.8"><stop offset="0" stop-color="#b8b8b8"/><stop offset="0.45" stop-color="#d2d2d2"/><stop offset="1" stop-color="#5a5a5a"/></linearGradient><linearGradient id="g9" gradientUnits="userSpaceOnUse" x1="564.6" y1="412.2" x2="567.3" y2="415.6"><stop offset="0" stop-color="#bcbcbc"/><stop offset="0.5" stop-color="#dcdcdc"/><stop offset="1" stop-color="#c0c0c0"/></linearGradient><linearGradient id="g10" gradientUnits="userSpaceOnUse" x1="562.2" y1="279.2" x2="554.3" y2="289.1"><stop offset="0" stop-color="#b4b4b4"/><stop offset="0.4" stop-color="#e8e8e8"/><stop offset="1" stop-color="#8a8a8a"/></linearGradient><linearGradient id="g11" gradientUnits="userSpaceOnUse" x1="467.8" y1="284.6" x2="475.1" y2="293.0"><stop offset="0" stop-color="#b4b4b4"/><stop offset="0.35" stop-color="#dadada"/><stop offset="1" stop-color="#4a4a4a"/></linearGradient><linearGradient id="g12" gradientUnits="userSpaceOnUse" x1="392.8" y1="387.0" x2="398.7" y2="389.7"><stop offset="0" stop-color="#a8a8a8"/><stop offset="0.4" stop-color="#d0d0d0"/><stop offset="1" stop-color="#5a5a5a"/></linearGradient><linearGradient id="g13" gradientUnits="userSpaceOnUse" x1="482.2" y1="524.1" x2="486.3" y2="519.1"><stop offset="0" stop-color="#e0e0e0"/><stop offset="0.6" stop-color="#d0d0d0"/><stop offset="1" stop-color="#b0b0b0"/></linearGradient><linearGradient id="g14" gradientUnits="userSpaceOnUse" x1="613.9" y1="564.1" x2="612.4" y2="563.5"><stop offset="0" stop-color="#8a8a8a"/><stop offset="1" stop-color="#c4c4c4"/></linearGradient><linearGradient id="g15" gradientUnits="userSpaceOnUse" x1="473.6" y1="248.9" x2="478.3" y2="254.1"><stop offset="0" stop-color="#4a4a4a"/><stop offset="0.45" stop-color="#dedede"/><stop offset="1" stop-color="#b0b0b0"/></linearGradient><linearGradient id="g16" gradientUnits="userSpaceOnUse" x1="611.2" y1="224.5" x2="613.9" y2="221.2"><stop offset="0" stop-color="#c6c6c6"/><stop offset="0.5" stop-color="#a0a0a0"/><stop offset="1" stop-color="#454545"/></linearGradient><linearGradient id="g17" gradientUnits="userSpaceOnUse" x1="762.2" y1="346.9" x2="765.4" y2="343.0"><stop offset="0" stop-color="#c6c6c6"/><stop offset="0.5" stop-color="#a0a0a0"/><stop offset="1" stop-color="#454545"/></linearGradient><linearGradient id="g18" gradientUnits="userSpaceOnUse" x1="679.2" y1="327.1" x2="682.1" y2="330.5"><stop offset="0" stop-color="#4a4a4a"/><stop offset="0.5" stop-color="#d0d0d0"/><stop offset="1" stop-color="#b0b0b0"/></linearGradient><linearGradient id="gcapA" gradientUnits="userSpaceOnUse" x1="398" y1="316" x2="411" y2="338"><stop offset="0" stop-color="#9a9a9a"/><stop offset=".45" stop-color="#dcdcdc"/><stop offset="1" stop-color="#a8a8a8"/></linearGradient><linearGradient id="gcapG" gradientUnits="userSpaceOnUse" x1="641" y1="511" x2="654" y2="533"><stop offset="0" stop-color="#9a9a9a"/><stop offset=".45" stop-color="#dcdcdc"/><stop offset="1" stop-color="#a8a8a8"/></linearGradient><linearGradient id="gslab" gradientUnits="userSpaceOnUse" x1="486" y1="340" x2="492" y2="342"><stop offset="0" stop-color="#c8c8c8"/><stop offset="1" stop-color="#8a8a8a"/></linearGradient><linearGradient id="g20" gradientUnits="userSpaceOnUse" x1="609.5" y1="446.7" x2="611.4" y2="448.9"><stop offset="0" stop-color="#9a9a9a"/><stop offset="0.5" stop-color="#e0e0e0"/><stop offset="1" stop-color="#c0c0c0"/></linearGradient></defs><rect x="225" y="153" width="791" height="585" fill="url(#bg3d)"/><rect x="225" y="153" width="791" height="1" fill="#d6d6d6"/><g id="model"><polygon points="312,421 392.5,320.5 554.8,177.3 560.7,177.8 666.6,264.2 670.3,268.3 669.8,274 659.5,344.8 707.2,302.8 716.6,302.8 824,391.2 824.6,393.2 839,499 631,679 313.5,425" fill="#b0b0b0"/>
<polygon points="312,421 392.5,320.5 414,339.5 371.5,434.5 593,613.75 634.8,514.5 657,536 628,677.5 313.5,425" fill="#9b9b9b"/>
<polygon points="312,421 392.5,320.5 395.8,323.2 315.3,423.7" fill="url(#g1)"/>
<polygon points="662.8,534.4 822.6,396.8 824.6,393.2 839,499 635,677.5" fill="#616161"/>
<polygon points="657,536 628,677.5 635,677.5 662.8,534.4" fill="url(#g2)"/>
<polygon points="660.6,521.1 813.5,388.9 822.6,396.8 662.8,534.4" fill="url(#g3)"/>
<polygon points="647.5,363.5 731,431 672.9,481.3 621.2,440" fill="#808080"/>
<polygon points="651,354 745.5,427 731,431 647.5,363.5" fill="url(#g4)"/>
<polygon points="648.8,512.3 745.5,426.6 730.7,431 634.8,514.5" fill="url(#g5)"/>
<polygon points="647.5,360 621.2,440.5 624,441.5 651.5,364" fill="url(#g6)"/>
<polygon points="608,319 666.6,272.6 669.8,274 659.5,344.8 565.6,426.8 556.8,424 578.5,406 604,327" fill="#404040"/>
<polygon points="602.5,326 576,403.5 581,405.5 609,322" fill="url(#g7)"/>
<polygon points="607.5,316 662.6,266.4 666.6,272.6 610,320.5" fill="url(#g8)"/>
<polygon points="553.8,420.8 575.4,403.6 578.5,406.5 556.8,424" fill="url(#g9)"/>
<polygon points="515,259.5 602.5,326 576,403.5 492.5,337" fill="#808080"/>
<polygon points="517,242.5 607.5,316 602.5,326 515,259.5" fill="url(#g10)"/>
<polygon points="420.6,339.3 515,259.5 492.5,337 380,433" fill="#404040"/>
<polygon points="419,327.4 516.6,241.8 515,259.5 420.6,339.3" fill="url(#g11)"/>
<polygon points="414,339.5 371.5,434.5 380,433 420.6,339.3" fill="url(#g12)"/>
<polygon points="371.5,434.5 593,613.75 593.75,606 380,433" fill="url(#g13)"/>
<polygon points="593,613.75 634.8,514.5 633,516.5 593.75,606" fill="url(#g14)"/>
<polygon points="392.5,320.5 554.8,177.3 559.7,182.7 406.6,317" fill="url(#g15)"/>
<polygon points="559.7,182.7 662.6,266.4 666.6,264.2 560.7,177.8" fill="url(#g16)"/>
<polygon points="710.9,305 813.5,388.9 824,391.2 716.6,302.8" fill="url(#g17)"/>
<polygon points="707.2,302.8 651.2,351.5 654.5,355 710.9,305" fill="url(#g18)"/>
<polygon points="554.8,177.3 560.7,177.8 559.7,182.7" fill="#8a8a8a"/>
<polygon points="707.2,302.8 716.6,302.8 710.9,305" fill="#8a8a8a"/>
<polygon points="662.6,266.4 666.6,264.2 670.3,268.3 669.8,274 666.6,272.6" fill="#8c8c8c"/>
<polygon points="813.5,388.9 818.1,388.9 824,391.2 824.6,393.2 822.6,396.8" fill="#bdbdbd"/>
<polygon points="392.5,320.8 397.7,315.6 406.6,317 419,327.4 421.3,336.3 417,340.7 414,339.3" fill="url(#gcapA)"/>
<polygon points="634.8,514.5 642,510.8 648.8,512.3 660.6,521.1 663.6,529.3 662.8,534.4 657,536" fill="url(#gcapG)"/>
<path d="M478.800 307L461.800 360.900L479.500 375.600L493.300 325.400C493 315 488 308 480.300 304.800Z" fill="#7a7a7a"/>
<path d="M480.300 304.800L484.700 301C493.500 305 498.700 312 498.700 321.700L484.700 371.200L479.500 375.600L493.300 325.400C493 315 488 308 480.300 304.800Z" fill="url(#gslab)"/>
<path d="M671.300 481.500L672.500 474C673.500 468 678 464.500 684 465.200L689.400 466.500L679 475.500Z" fill="#989898"/>
<polyline points="313.5,425 312,421 392.5,320.5 554.8,177.3 560.7,177.8" fill="none" stroke="#141414" stroke-width="1.6" stroke-linejoin="round" stroke-linecap="round"/>
<polyline points="670.3,268.3 669.8,274 659.5,344.8" fill="none" stroke="#141414" stroke-width="1.6" stroke-linejoin="round" stroke-linecap="round"/>
<polyline points="651.2,351.5 707.2,302.8 716.6,302.8" fill="none" stroke="#141414" stroke-width="1.6" stroke-linejoin="round" stroke-linecap="round"/>
<polyline points="824,391.2 824.6,393.2 839,499 631,679 313.5,425" fill="none" stroke="#141414" stroke-width="1.6" stroke-linejoin="round" stroke-linecap="round"/>
<polyline points="313.5,425 627.5,677.5" fill="none" stroke="#141414" stroke-width="1.6" stroke-linejoin="round" stroke-linecap="round"/>
<polyline points="406.6,317 559.7,182.7 662.6,266.4 607.5,316 517,242.5 419,327.4" fill="none" stroke="#141414" stroke-width="1.6" stroke-linejoin="round" stroke-linecap="round"/>
<polyline points="662.6,266.4 666.3,266.3 670.3,268.3" fill="none" stroke="#141414" stroke-width="1.6" stroke-linejoin="round" stroke-linecap="round"/>
<polyline points="666.6,272.6 610,320.5" fill="none" stroke="#141414" stroke-width="1.6" stroke-linejoin="round" stroke-linecap="round"/>
<polyline points="420.6,339.3 515,259.5 602.5,326" fill="none" stroke="#141414" stroke-width="1.6" stroke-linejoin="round" stroke-linecap="round"/>
<polyline points="517,242.5 515,259.5 492.5,337" fill="none" stroke="#141414" stroke-width="1.6" stroke-linejoin="round" stroke-linecap="round"/>
<polyline points="492.5,337 576,403.5" fill="none" stroke="#141414" stroke-width="1.6" stroke-linejoin="round" stroke-linecap="round"/>
<polyline points="607.5,316 602.5,326 576,403.5" fill="none" stroke="#141414" stroke-width="1.6" stroke-linejoin="round" stroke-linecap="round"/>
<polyline points="609,322 581,405.5" fill="none" stroke="#141414" stroke-width="1.6" stroke-linejoin="round" stroke-linecap="round"/>
<polyline points="553.8,420.8 575.4,403.6" fill="none" stroke="#141414" stroke-width="1.6" stroke-linejoin="round" stroke-linecap="round"/>
<polyline points="556.8,424 578.5,406.5" fill="none" stroke="#141414" stroke-width="1.6" stroke-linejoin="round" stroke-linecap="round"/>
<polyline points="565.6,426.8 659.5,344.8" fill="none" stroke="#141414" stroke-width="1.6" stroke-linejoin="round" stroke-linecap="round"/>
<polyline points="380,433 461.8,360.9" fill="none" stroke="#141414" stroke-width="1.6" stroke-linejoin="round" stroke-linecap="round"/>
<polyline points="392.5,320.8 397.7,315.6 406.6,317 419,327.4 421.3,336.3 417,340.7 414,339.3 392.5,320.8" fill="none" stroke="#141414" stroke-width="1.6" stroke-linejoin="round" stroke-linecap="round"/>
<polyline points="406.6,317 419,327.4" fill="none" stroke="#141414" stroke-width="1.6" stroke-linejoin="round" stroke-linecap="round"/>
<polyline points="418.5,328 415,338.5" fill="none" stroke="#141414" stroke-width="1.6" stroke-linejoin="round" stroke-linecap="round"/>
<polyline points="660,522 657.5,534" fill="none" stroke="#141414" stroke-width="1.6" stroke-linejoin="round" stroke-linecap="round"/>
<polyline points="414,339.5 371.5,434.5 593,613.75 634.8,514.5" fill="none" stroke="#141414" stroke-width="1.6" stroke-linejoin="round" stroke-linecap="round"/>
<polyline points="420.6,339.3 380,433 593.75,606 633,516.5" fill="none" stroke="#141414" stroke-width="1.6" stroke-linejoin="round" stroke-linecap="round"/>
<polyline points="634.8,514.5 642,510.8 648.8,512.3 660.6,521.1 663.6,529.3 662.8,534.4 657,536 634.8,514.5" fill="none" stroke="#141414" stroke-width="1.6" stroke-linejoin="round" stroke-linecap="round"/>
<polyline points="657,536 628,677.5" fill="none" stroke="#141414" stroke-width="1.6" stroke-linejoin="round" stroke-linecap="round"/>
<polyline points="662.8,534.4 635,677.5" fill="none" stroke="#141414" stroke-width="1.6" stroke-linejoin="round" stroke-linecap="round"/>
<polyline points="662.8,534.4 822.6,396.8 824.6,393.2" fill="none" stroke="#141414" stroke-width="1.6" stroke-linejoin="round" stroke-linecap="round"/>
<polyline points="660.6,521.1 813.5,388.9 818.1,388.9 822.6,396.8" fill="none" stroke="#141414" stroke-width="1.6" stroke-linejoin="round" stroke-linecap="round"/>
<polyline points="648.8,512.3 745.5,426.6 651,354" fill="none" stroke="#141414" stroke-width="1.6" stroke-linejoin="round" stroke-linecap="round"/>
<polyline points="634.8,514.5 730.7,431 647.5,363.5" fill="none" stroke="#141414" stroke-width="1.6" stroke-linejoin="round" stroke-linecap="round"/>
<polyline points="745.5,426.6 730.7,431" fill="none" stroke="#141414" stroke-width="1.6" stroke-linejoin="round" stroke-linecap="round"/>
<polyline points="651,354 647.5,360 621.2,440.5" fill="none" stroke="#141414" stroke-width="1.6" stroke-linejoin="round" stroke-linecap="round"/>
<polyline points="651.5,364 624,441.5" fill="none" stroke="#141414" stroke-width="1.6" stroke-linejoin="round" stroke-linecap="round"/>
<polyline points="621.2,440 671,479.5" fill="none" stroke="#141414" stroke-width="1.6" stroke-linejoin="round" stroke-linecap="round"/>
<polyline points="710.9,305 813.5,388.9" fill="none" stroke="#141414" stroke-width="1.6" stroke-linejoin="round" stroke-linecap="round"/>
<polyline points="710.9,305 654.5,355" fill="none" stroke="#141414" stroke-width="1.6" stroke-linejoin="round" stroke-linecap="round"/>
<polyline points="315.3,423.7 395.8,323.2" fill="none" stroke="#141414" stroke-width="1.6" stroke-linejoin="round" stroke-linecap="round"/>
<polyline points="560.7,177.8 666.6,264.2 670.3,268.3" fill="none" stroke="#2c2c2c" stroke-width="0.9" stroke-linejoin="round" stroke-linecap="round"/>
<polyline points="716.6,302.8 824,391.2" fill="none" stroke="#2c2c2c" stroke-width="0.9" stroke-linejoin="round" stroke-linecap="round"/>
<polyline points="553.8,420.8 601,458.2" fill="none" stroke="#3a3a3a" stroke-width="0.8" stroke-linejoin="round" stroke-linecap="round"/>
<polygon points="599.3,455.8 619.6,437.6 621.2,440 601,458.2" fill="url(#g20)"/>
<polyline points="601,458.2 621.2,440" fill="none" stroke="#141414" stroke-width="1" stroke-linejoin="round" stroke-linecap="round"/>
<polyline points="599.3,455.8 619.6,437.6" fill="none" stroke="#555" stroke-width="0.7" stroke-linejoin="round" stroke-linecap="round"/>
<path d="M478.800 307L461.800 360.900L479.500 375.600L493.300 325.400C493 315 488 308 480.300 304.800L478.800 307M480.300 304.800L484.700 301C493.500 305 498.700 312 498.700 321.700L484.700 371.200L479.500 375.600" fill="none" stroke="#141414" stroke-width="1.600" stroke-linejoin="round"/>
<path d="M671.300 481.500L672.500 474C673.500 468 678 464.500 684 465.200L689.400 466.500M679 475.500C679.500 471 682 468 686 467.500" fill="none" stroke="#161616" stroke-width="1.100"/></g>
<g id="navcube">
<g fill="#c6c6d8" fill-opacity=".92">
<polygon points="944.7,160.2 933.4,173 956.9,173"/>
<polygon points="944.7,291.5 933.4,278.7 956.9,278.7"/>
<polygon points="879.2,225.7 892.6,214.3 892.6,237.4"/>
<polygon points="1010.9,225.7 997.5,214.3 997.5,237.4"/>
<circle cx="1002.3" cy="168.6" r="6.800"/>
<path d="M925.6 166.9 L928.0 175.1 Q915.1 177.9 906.6 187.6 L910.4 190.6 L895.6 194.4 L897.3 179.1 L900.7 182.5 Q910.9 170.3 925.6 166.9Z"/>
<path d="M963.9 166.9 L961.5 175.1 Q974.3 177.9 982.8 187.6 L979.1 190.6 L993.8 194.4 L992.1 179.1 L988.7 182.5 Q978.6 170.3 963.9 166.9Z"/>
</g>
<g fill="#c6c6d8" stroke="#222" stroke-width=".8" stroke-linejoin="round"><polygon points="979.4,268.5 989.2,263.4 999.7,266.8 999.7,277.8 989.6,282.9 979.4,278.7"/><polyline fill="none" points="979.4,268.5 989.6,272.2 999.7,266.8"/><polyline fill="none" points="989.6,272.2 989.6,282.9"/></g>
<line x1="891.4" y1="243.1" x2="923.6" y2="215.7" stroke="#00e000" stroke-width="1.500"/>
<polygon points="943,184.4 955.7,184.7 967.6,193.2 981.1,204.2 986.5,217.7 985.3,226.2 982.8,234.6 967.6,253.3 954,266.8 940.5,267.1 932,266.8 915.1,251.6 905.8,239.7 903.6,229.6 908.3,210.9 915.1,202.5 933.7,186.4" fill="#c6c6d8" fill-opacity=".9" stroke="#1a1a1a" stroke-width="1.150" stroke-linejoin="round"/>
<g fill="none" stroke="#1e1e1e" stroke-width=".95" stroke-linejoin="round">
<polygon points="923.2,203.8 942.5,185.9 956.6,185.9 978.6,205.5 979.1,215.2 960,230.9 946.9,231.3 924.4,215.2"/>
<polygon points="910.4,219.4 916.8,219.7 941.3,238.9 945.2,248.2 940.5,266.8 932.9,266.5 906.6,241.4 904.6,231.3"/>
<polygon points="946.9,231.6 960,231.3 962.8,238.9 954.9,249 945.6,248.2 941.7,238.9"/>
<polyline points="962.8,238.9 982.8,222.8"/>
<polyline points="954.9,249.4 951.5,266.8"/>
<polyline points="954.9,249.4 960.8,258.3 982.8,234.6"/>
<polyline points="923.2,203.8 915.4,202.5"/>
<polyline points="924.4,215.2 916.8,219.7"/>
<polyline points="910.4,219.4 908.3,210.9"/>
<polyline points="978.6,205.5 981.1,204.2"/>
<polyline points="979.1,215.2 986.5,217.7"/>
<polyline points="956.6,185.9 967.6,193.2"/>
</g>
<line x1="903.6" y1="233.3" x2="923.6" y2="215.7" stroke="#b8f0b8" stroke-width="1.300"/>
<text filter="url(#noop)" transform="matrix(0.823,0.568,-0.62,0.9,952.4,208.2)" text-anchor="middle" font-family="Liberation Sans,sans-serif" font-size="13.5" fill="#1c1c22" stroke="#1c1c22" stroke-width=".3" y="4.8">GÓRA</text>
<text filter="url(#noop)" transform="matrix(0.819,0.574,-0.14,0.78,925.1,241.5)" text-anchor="middle" font-family="Liberation Sans,sans-serif" font-size="11.2" fill="#2a2a32" stroke="#2a2a32" stroke-width=".3" y="4.0">PRZÓD</text>
<text filter="url(#noop)" transform="matrix(0.78,-0.625,0.06,0.36,968.2,244.8)" text-anchor="middle" font-family="Liberation Sans,sans-serif" font-size="8.9" fill="#4a4a52" stroke="#4a4a52" stroke-width=".3" y="3.2">PRAWA</text>
<line x1="891.4" y1="243.1" x2="928.3" y2="274.4" stroke="#f00000" stroke-width="1.600"/>
<line x1="891.4" y1="243.1" x2="900.4" y2="214.3" stroke="#0000f0" stroke-width="1.600"/>
<line x1="891.4" y1="243.1" x2="902.9" y2="233.8" stroke="#00e000" stroke-width="1.600"/>
</g>
<g id="axiscross" font-family="Liberation Sans,sans-serif" font-size="9.500" fill="#000">
<path d="M988 708L1003.800 720.600" stroke="#7c1a1a" stroke-width="1.100"/><path d="M1003.800 720.600L998 718.500L1000.500 715.400Z" fill="#7c1a1a"/>
<path d="M988 708L998.700 699.600" stroke="#1a8a1a" stroke-width="1.100"/><path d="M998.700 699.600L994 700.800L996 703.500Z" fill="#1a8a1a"/>
<path d="M988 708L992.400 693.300" stroke="#1a1a8a" stroke-width="1.100"/><path d="M992.400 693.300L989 699.500L992.500 700.500Z" fill="#1a1a8a"/>
<g filter="url(#noop)" stroke="#000" stroke-width=".25"><text x="993.500" y="691.800">Z</text><text x="1000" y="697.800">Y</text><text x="1004.600" y="719.800">X</text></g>
</g>
</svg>
</div>
<!-- BOTTOM -->
<div id="bottom">
<div class="abs" style="left:226px;top:738px;width:790px;height:24px;background:#f0f0f0"></div>
<div class="abs" style="left:227px;top:738px;width:139px;height:20px;background:#efefef;border:1px solid #dadada;border-top:none"></div>
<div class="abs" style="left:365px;top:738px;width:140px;height:22px;background:#f5f5f5;border:1px solid #dedede;border-top:none"></div>
<svg class="abs" style="left:236px;top:738.5px" width="17" height="17" viewBox="0 0 18 18"><path d="M1.300 1.300H9.900V4.600H4.800V7H8V9.700H4.800V16.600H1.300Z" fill="#e81c1c" stroke="#7a0c0c" stroke-width=".7"/><path d="M9.83 5.40L11.97 5.40L11.81 7.11L12.94 7.57L14.03 6.26L15.54 7.77L14.23 8.86L14.69 9.99L16.40 9.83L16.40 11.97L14.69 11.81L14.23 12.94L15.54 14.03L14.03 15.54L12.94 14.23L11.81 14.69L11.97 16.40L9.83 16.40L9.99 14.69L8.86 14.23L7.77 15.54L6.26 14.03L7.57 12.94L7.11 11.81L5.40 11.97L5.40 9.83L7.11 9.99L7.57 8.86L6.26 7.77L7.77 6.26L8.86 7.57L9.99 7.11Z" fill="#4a7ab8" stroke="#2b4d85" stroke-width=".6" stroke-linejoin="round"/><circle cx="10.900" cy="10.900" r="1.700" fill="#f7f7f7"/></svg>
<div class="t" style="left:256.7px;top:741.7px;font-size:11px;letter-spacing:0.04px;">Strona startowa</div>
<svg class="abs" style="left:339px;top:741.500px" width="14" height="14" viewBox="0 0 14 14"><rect x=".5" y=".5" width="13" height="13" rx="1.500" fill="#c9c9c9" stroke="#aeaeae"/><path d="M4 4l6 6M10 4l-6 6" stroke="#fff" stroke-width="2"/></svg>
<svg class="abs" style="left:377.500px;top:739.5px" width="17" height="17" viewBox="0 0 18 18"><path d="M1.300 1.300H9.900V4.600H4.800V7H8V9.700H4.800V16.600H1.300Z" fill="#e81c1c" stroke="#7a0c0c" stroke-width=".7"/><path d="M9.83 5.40L11.97 5.40L11.81 7.11L12.94 7.57L14.03 6.26L15.54 7.77L14.23 8.86L14.69 9.99L16.40 9.83L16.40 11.97L14.69 11.81L14.23 12.94L15.54 14.03L14.03 15.54L12.94 14.23L11.81 14.69L11.97 16.40L9.83 16.40L9.99 14.69L8.86 14.23L7.77 15.54L6.26 14.03L7.57 12.94L7.11 11.81L5.40 11.97L5.40 9.83L7.11 9.99L7.57 8.86L6.26 7.77L7.77 6.26L8.86 7.57L9.99 7.11Z" fill="#4a7ab8" stroke="#2b4d85" stroke-width=".6" stroke-linejoin="round"/><circle cx="10.900" cy="10.900" r="1.700" fill="#f7f7f7"/></svg>
<div class="t" style="left:398.4px;top:742.3px;font-size:11px;letter-spacing:0.22px;">retevis v2.2 : 1</div>
<svg class="abs" style="left:477px;top:743px" width="14" height="14" viewBox="0 0 14 14"><rect x=".5" y=".5" width="13" height="13" rx="1.500" fill="#e4572e" stroke="#b93a17"/><path d="M4 4l6 6M10 4l-6 6" stroke="#fff" stroke-width="2"/></svg>
<div class="docktitle" style="left:0;top:766px;width:1016px;height:19px"></div>
<div class="t" style="left:5.5px;top:770.2px;font-size:12px;letter-spacing:0.02px;">Widok raportu</div>
<svg class="abs" style="left:979px;top:771px" width="10" height="10" viewBox="0 0 10 10" fill="none" stroke="#1e1e1e" stroke-width="1.100"><rect x="3.600" y="1.100" width="5.300" height="5.300"/><path d="M3.600 1.400H8.900" stroke-width="1.800"/><rect x=".8" y="3.800" width="5.300" height="5.400" fill="#d9d9d9"/><path d="M.8 4.200H6.100" stroke-width="1.800"/></svg>
<svg class="abs" style="left:1000px;top:771px" width="10" height="10" viewBox="0 0 10 10" fill="none" stroke="#1a1a1a" stroke-width="1.900"><path d="M1.500 1.500l7 7M8.500 1.500l-7 7"/></svg>
<div class="abs" style="left:0;top:787px;width:1015px;height:71px;background:#fff;border-bottom:1px solid #787878;left:1px"></div>
<div class="t" style="left:1.5px;top:866.7px;font-size:11px;letter-spacing:-0.06px;">Valid, wewnętrzna nazwa: Fillet</div>
<div class="abs" style="left:752px;top:860px;width:1px;height:24px;background:#d2d2d2"></div>
<div class="abs" style="left:854px;top:860px;width:1px;height:24px;background:#d2d2d2"></div>
<div class="abs" style="left:998px;top:860px;width:1px;height:24px;background:#d2d2d2"></div>
<svg class="abs" style="left:770px;top:866px" width="9" height="15" viewBox="0 0 9 15"><rect x="1" y="1" width="7" height="12.500" rx="3" fill="none" stroke="#222" stroke-width="1.300"/><path d="M4.500 3.500v3" stroke="#222" stroke-width="1.300"/></svg>
<div class="t" style="left:785px;top:866.2px;font-size:11px;letter-spacing:-0.49px;">TinkerCAD</div>
<div class="dd" style="left:839px;top:871px;border-left-width:4px;border-right-width:4px;border-top-width:4.500px"></div>
<div class="t" style="left:863.25px;top:866.2px;font-size:11px;letter-spacing:-0.25px;">165,93 mm x 122,14 mm</div>
<div class="dd" style="left:983px;top:870px;border-left-width:4px;border-right-width:4px;border-top-width:4.500px"></div>
<svg class="abs" style="left:1004px;top:875px" width="12" height="11" viewBox="0 0 12 11" fill="#b6b6b6"><rect x="8" y="2" width="2" height="2"/><rect x="5" y="5" width="2" height="2"/><rect x="8" y="5" width="2" height="2"/><rect x="2" y="8" width="2" height="2"/><rect x="5" y="8" width="2" height="2"/><rect x="8" y="8" width="2" height="2"/></svg>
<svg class="abs" style="left:0;top:882px" width="4" height="4" viewBox="0 0 4 4"><path d="M0 0V4H4A4 4 0 0 1 0 0Z" fill="#8f949c"/></svg>
<svg class="abs" style="left:1012px;top:882px" width="4" height="4" viewBox="0 0 4 4"><path d="M4 0V4H0A4 4 0 0 0 4 0Z" fill="#8f949c"/></svg>
</div>
</body>
</html>
